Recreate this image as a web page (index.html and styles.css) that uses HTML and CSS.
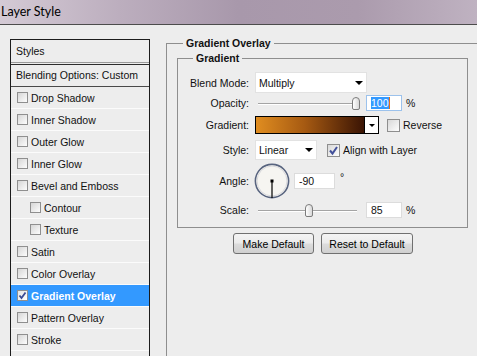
FILE: index.html
```html
<!DOCTYPE html>
<html lang="en">
<head>
  <meta charset="UTF-8">
  <title>Layer Style</title>
  <link rel="stylesheet" href="styles.css">
</head>
<body>
  <div class="titlebar"><span class="title">Layer Style</span></div>

  <div class="main">
    <div class="styles-panel">
      <div class="styles-head">Styles</div>
      <div class="blend-row">Blending Options: Custom</div>
      <div class="row"><span class="check"></span>Drop Shadow</div>
      <div class="row"><span class="check"></span>Inner Shadow</div>
      <div class="row"><span class="check"></span>Outer Glow</div>
      <div class="row"><span class="check"></span>Inner Glow</div>
      <div class="row"><span class="check"></span>Bevel and Emboss</div>
      <div class="row sub"><span class="check"></span>Contour</div>
      <div class="row sub"><span class="check"></span>Texture</div>
      <div class="row"><span class="check"></span>Satin</div>
      <div class="row"><span class="check"></span>Color Overlay</div>
      <div class="row selected"><span class="check on"><svg width="9" height="9" viewBox="0 0 9 9"><path d="M1.5 4.5 L3.5 7 L7.5 1.5" fill="none" stroke="#3b4b94" stroke-width="1.8"/></svg></span>Gradient Overlay</div>
      <div class="row"><span class="check"></span>Pattern Overlay</div>
      <div class="row"><span class="check"></span>Stroke</div>
      <div class="row"></div>
    </div>

    <div class="content">
      <div class="group outer">
        <div class="group-title">Gradient Overlay</div>

        <div class="group inner">
          <div class="group-title">Gradient</div>

          <div class="field f-blend">
            <span class="label">Blend Mode:</span>
            <div class="select blend-select">Multiply<span class="arrow"></span></div>
          </div>

          <div class="field f-opacity">
            <span class="label">Opacity:</span>
            <div class="slider"><div class="track"></div><div class="thumb" style="left: 97px"></div></div>
            <div class="num focused"><span class="sel">100</span><span class="caret"></span></div>
            <span class="unit">%</span>
          </div>

          <div class="field f-gradient">
            <span class="label">Gradient:</span>
            <div class="swatch"></div>
            <div class="swatch-btn"><span class="arrow small"></span></div>
            <span class="box"></span>
            <span class="opt">Reverse</span>
          </div>

          <div class="field f-style">
            <span class="label">Style:</span>
            <div class="select style-select">Linear<span class="arrow"></span></div>
            <span class="box checked"><svg width="11" height="11" viewBox="0 0 11 11"><path d="M2 5.5 L4.5 8.5 L9 2" fill="none" stroke="#42509a" stroke-width="2"/></svg></span>
            <span class="opt">Align with Layer</span>
          </div>

          <div class="field f-angle">
            <span class="label">Angle:</span>
            <svg class="dial" width="36" height="36" viewBox="0 0 36 36">
              <circle cx="18" cy="18" r="16.6" fill="#f6f5f1" stroke="#58647f" stroke-width="1.6"/>
              <circle cx="18" cy="18" r="15" fill="none" stroke="#d9d9dc" stroke-width="1"/>
              <line x1="18" y1="18" x2="18" y2="35" stroke="#000" stroke-width="1.2"/>
              <rect x="16.5" y="16.5" width="3" height="3" fill="#000"/>
            </svg>
            <div class="num angle-num">-90</div>
            <span class="deg">°</span>
          </div>

          <div class="field f-scale">
            <span class="label">Scale:</span>
            <div class="slider"><div class="track"></div><div class="thumb" style="left: 50px"></div></div>
            <div class="num">85</div>
            <span class="unit">%</span>
          </div>
        </div>

        <div class="buttons">
          <div class="btn make">Make Default</div>
          <div class="btn reset">Reset to Default</div>
        </div>
      </div>
    </div>
  </div>
</body>
</html>
```

FILE: styles.css
```css
html, body {
  margin: 0;
  padding: 0;
  width: 477px;
  height: 356px;
  overflow: hidden;
  background: #ededed;
  font-family: "Liberation Sans", Arial, sans-serif;
  font-size: 10.5px;
  color: #111;
}

.titlebar {
  height: 24px;
  border-bottom: 1px solid #4c4c4c;
  background: linear-gradient(90deg, #d4cad5 0%, #bcaebe 25%, #a898ab 50%, #ab9bad 75%, #bfb2c1 100%);
  display: flex;
  align-items: center;
}

.title {
  font-family: Lato, "Open Sans", sans-serif;
  font-size: 12.5px;
  color: #000;
  padding-left: 1px;
  margin-top: -1px;
}

.main {
  display: flex;
  align-items: flex-start;
}

/* left list */
.styles-panel {
  flex-shrink: 0;
  box-sizing: border-box;
  width: 140px;
  height: 317px;
  margin: 14px 0 0 10px;
  border: 1px solid #1c1c1c;
  border-bottom: none;
  white-space: nowrap;
  overflow: hidden;
}

.styles-head {
  height: 22px;
  line-height: 22px;
  padding-left: 5px;
  border-bottom: 1px solid #9a9a9a;
}

.blend-row {
  height: 21px;
  line-height: 21px;
  padding-left: 5px;
  margin-top: 1px;
  border-top: 1px solid #2c2c2c;
  border-bottom: 1px solid #4a4a4a;
}

.row {
  height: 21px;
  border-bottom: 1px solid #fbfbfb;
  display: flex;
  align-items: center;
  padding-left: 6px;
}

.row.sub {
  padding-left: 19px;
}

.row.selected {
  background: #3399ff;
  color: #fff;
  font-weight: bold;
}

.check {
  flex-shrink: 0;
  box-sizing: border-box;
  width: 11px;
  height: 11px;
  margin-right: 3px;
  border: 1px solid #8f8f8f;
  background: linear-gradient(135deg, #d6d6d6, #fdfdfd);
  display: flex;
  align-items: center;
  justify-content: center;
}

.check.on {
  background: linear-gradient(135deg, #e4e4e4, #ffffff);
}

/* right side */
.content {
  flex-shrink: 0;
  margin: 18px 0 0 16px;
  white-space: nowrap;
}

.group {
  border: 1px solid #8e8e8e;
}

.group-title {
  font-weight: bold;
  line-height: 14px;
  height: 14px;
  width: fit-content;
  padding: 0 3px;
  background: #ededed;
  margin: -8px 0 0 16px;
}

.outer {
  box-sizing: border-box;
  width: 311px;
  height: 313px;
  border-right: none;
  border-bottom: none;
}

.inner {
  box-sizing: border-box;
  width: 291px;
  margin: 8px 0 0 10px;
  padding-bottom: 6px;
}

.inner .group-title {
  margin-left: 15px;
  margin-bottom: 7px;
}

.field {
  display: flex;
  align-items: center;
}

.label {
  width: 71px;
  text-align: right;
  margin-right: 6px;
}

.f-blend { height: 21px; }
.f-opacity { height: 20px; }
.f-gradient { height: 24px; }
.f-style { height: 26px; }
.f-angle { height: 36px; }
.f-scale { height: 22px; }

.select {
  box-sizing: border-box;
  background: #fff;
  border: 1px solid #e2e2e2;
  display: flex;
  align-items: center;
  justify-content: space-between;
  padding: 0 3px 0 3px;
}

.blend-select {
  width: 112px;
  height: 21px;
}

.style-select {
  width: 62px;
  height: 20px;
}

.arrow {
  width: 0;
  height: 0;
  border-left: 4px solid transparent;
  border-right: 4px solid transparent;
  border-top: 4px solid #000;
}

.arrow.small {
  border-left-width: 3px;
  border-right-width: 3px;
  border-top-width: 3px;
}

.slider {
  position: relative;
  width: 106px;
  height: 14px;
}

.track {
  position: absolute;
  left: 3px;
  right: 4px;
  top: 7px;
  height: 1px;
  background: #a4a4a4;
  border-bottom: 1px solid #fff;
}

.thumb {
  position: absolute;
  top: 1px;
  box-sizing: border-box;
  width: 8px;
  height: 13px;
  border: 1px solid #7c7c7c;
  border-radius: 4px 4px 2px 2px;
  background: linear-gradient(90deg, #ffffff, #d8d8d8);
}

.num {
  box-sizing: border-box;
  width: 36px;
  height: 16px;
  margin-left: 5px;
  background: #fff;
  border: 1px solid #dcdcdc;
  padding-left: 4px;
  display: flex;
  align-items: center;
}

.num.focused {
  border-color: #9cc2ec;
}

.sel {
  background: #3399ff;
  color: #fff;
}

.caret {
  width: 1px;
  height: 12px;
  background: #e0701a;
}

.unit {
  margin-left: 4px;
}

.swatch {
  box-sizing: border-box;
  width: 110px;
  height: 18px;
  border: 1px solid #000;
  background: linear-gradient(90deg, #e08d20 0%, #a65a12 45%, #3a1404 100%);
}

.swatch-btn {
  box-sizing: border-box;
  width: 14px;
  height: 18px;
  border: 1px solid #000;
  border-left: none;
  background: #fff;
  display: flex;
  align-items: center;
  justify-content: center;
}

.box {
  box-sizing: border-box;
  width: 13px;
  height: 13px;
  border: 1px solid #8e8e8e;
  background: linear-gradient(135deg, #d8d8d8, #fdfdfd);
  display: flex;
  align-items: center;
  justify-content: center;
}

.f-gradient .box { margin-left: 8px; }
.f-style .box { margin-left: 10px; }

.opt {
  margin-left: 3px;
}

.dial {
  margin-left: -1px;
}

.angle-num {
  width: 41px;
  margin-left: 4px;
}

.deg {
  align-self: flex-start;
  margin: 8px 0 0 5px;
}

.buttons {
  display: flex;
  gap: 7px;
  margin: 5px 0 0 66px;
}

.btn {
  box-sizing: border-box;
  height: 21px;
  border: 1px solid #707070;
  border-radius: 3px;
  background: linear-gradient(#f4f4f4 0%, #ebebeb 48%, #dcdcdc 52%, #d0d0d0 100%);
  display: flex;
  align-items: center;
  justify-content: center;
  color: #000;
}

.make { width: 81px; }
.reset { width: 92px; }
```
